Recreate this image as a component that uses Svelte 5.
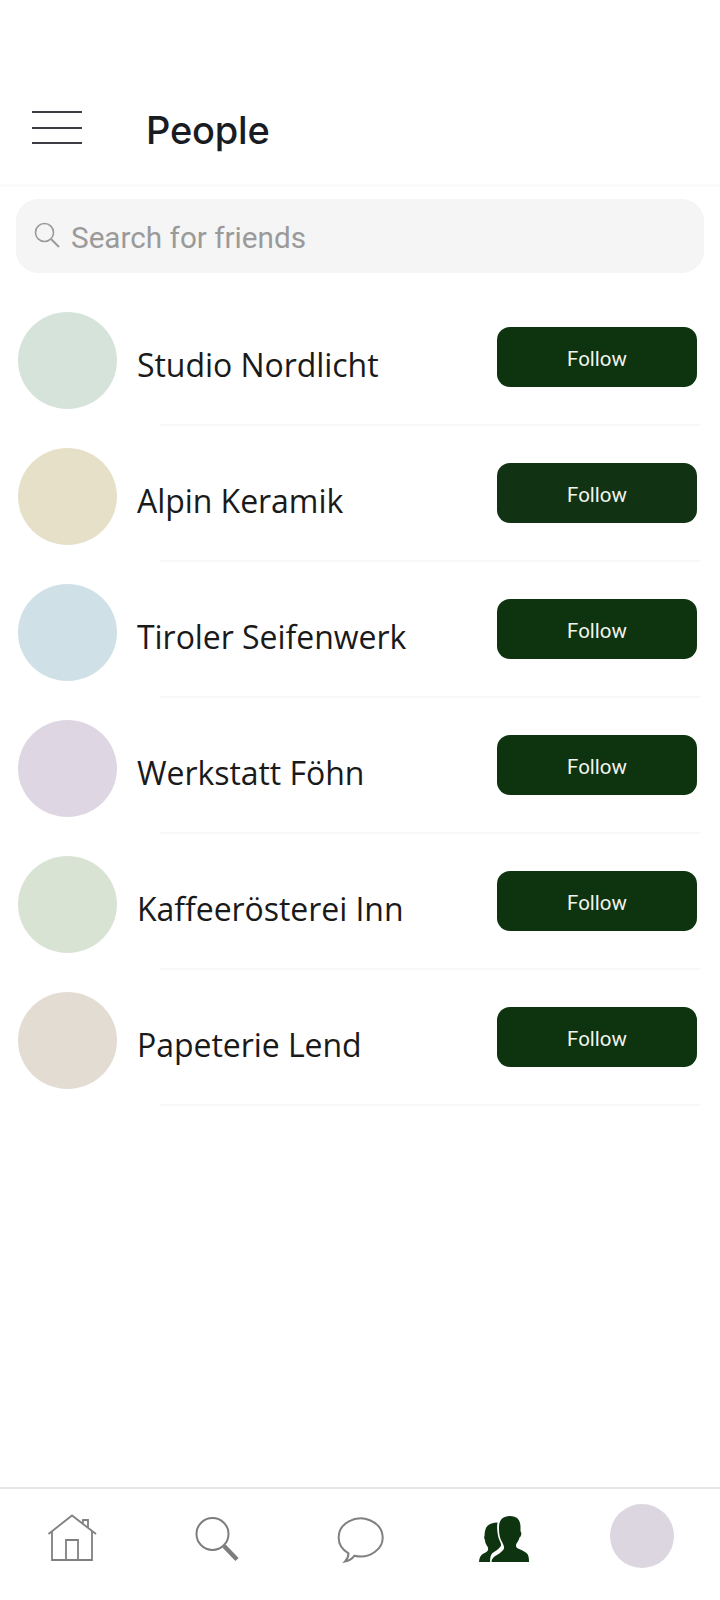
<script>
  const people = [
    { name: 'Studio Nordlicht', color: '#d5e3db', btn: '#0e330f' },
    { name: 'Alpin Keramik', color: '#e6e0c8', btn: '#123313' },
    { name: 'Tiroler Seifenwerk', color: '#cfe0e6', btn: '#0e330f' },
    { name: 'Werkstatt Föhn', color: '#dfd6e3', btn: '#0e330f' },
    { name: 'Kaffeerösterei Inn', color: '#d9e3d4', btn: '#0e330f' },
    { name: 'Papeterie Lend', color: '#e3dcd3', btn: '#0e330f' }
  ];
</script>

<div class="page">
  <header class="header">
    <button class="burger" aria-label="Menu"><span></span><span></span><span></span></button>
    <h1>People</h1>
  </header>

  <div class="search">
    <svg class="search-icon" viewBox="0 0 28 28" width="28" height="28" fill="none" stroke="#9a9a9a" stroke-width="1.6">
      <circle cx="11.5" cy="11.5" r="9" />
      <path d="M18 18l8 8" stroke-width="2" />
    </svg>
    <span class="placeholder">Search for friends</span>
  </div>

  <ul class="list">
    {#each people as p}
      <li class="row">
        <div class="avatar" style="background:{p.color}"></div>
        <span class="name">{p.name}</span>
        <button class="follow" style="background:{p.btn}">Follow</button>
      </li>
    {/each}
  </ul>

  <nav class="nav">
    <div class="cell">
      <svg viewBox="0 0 50 48" width="50" height="48" fill="none" stroke="#808080" stroke-width="1.8">
        <path d="M1.500 20L25 1.500 49 20" />
        <path d="M5 17v29h40V17" />
        <path d="M19 46V26h12v20" />
        <path d="M36 9V6h5v7" />
      </svg>
    </div>
    <div class="cell">
      <svg viewBox="0 0 46 48" width="46" height="48" fill="none" stroke="#7d7d7d" stroke-width="2">
        <circle cx="19.500" cy="20" r="16" />
        <path d="M31 32L44 45.500" stroke-width="4.500" />
      </svg>
    </div>
    <div class="cell">
      <svg viewBox="0 0 50 50" width="50" height="50" fill="none" stroke="#808080" stroke-width="2">
        <path d="M19.500 41.700A22 19 0 1 0 13.500 39.300C13.500 42 12 45.500 10 47.500C13.500 47 17 45 19.500 41.700Z" />
      </svg>
    </div>
    <div class="cell">
      <svg viewBox="0 0 52 48" width="52" height="48" fill="#0e330f">
        <path d="M13.500 48c.3-2.500 1-4 3-5.500 3-2 7-4 9-7 1-1.500.5-3.500-.5-5.500-1.500-3-3-5.500-3.500-9-.5-3-.5-6-.5-8C21 6 25 2 32 2s10.500 4 10.500 11v4.500c1 .5 1 2.500.5 4-.3 1-.8 1.500-1.500 2-.5 2.500-2 4.500-3 6-1 2-.5 4 1.500 5 3 1.500 6 2.500 8.500 4.500 2 1.500 2.500 5 2.500 9z" />
        <path d="M1 48c.2-3 1-6 3-7.500 2-1.500 5.500-2.500 6-4.500 .5-2-.5-3.500-1.500-5-1-1.500-1.500-3.500-1.500-5-1-1-1-3-.5-4 0-3 .5-6 1.500-8 1.500-3 5.500-5.500 11.500-5.500-.5 3-.5 6 0 10 .5 3.500 1 6 2.500 9 1 2 1.500 3.500 .5 5-1.500 2.500-5 4.500-8 6.500-1.500 1.500-2.500 4-2.500 9z" />
      </svg>
    </div>
    <div class="cell last"><div class="me"></div></div>
  </nav>
</div>

<style>
  :global(body) { margin: 0; background: #fff; }
  .page {
    width: 720px;
    height: 1600px;
    display: flex;
    flex-direction: column;
    background: #fff;
    overflow: hidden;
    font-family: "Inter", "Liberation Sans", sans-serif;
  }
  .header {
    height: 187px;
    box-sizing: border-box;
    padding: 111px 0 0 32px;
    display: flex;
    align-items: flex-start;
    border-bottom: 3px solid #fbfbfb;
  }
  .burger {
    width: 50px;
    height: 33px;
    padding: 0;
    border: 0;
    background: none;
    display: flex;
    flex-direction: column;
    justify-content: space-between;
  }
  .burger span { display: block; height: 2px; background: #3c3d42; }
  h1 {
    margin: -4px 0 0 64px;
    font-size: 38px;
    line-height: 46px;
    font-weight: 500;
    letter-spacing: -0.2px;
    color: #1a1c24;
  }
  .search {
    margin: 12px 16px 0;
    height: 74px;
    border-radius: 22px;
    background: #f5f5f5;
    display: flex;
    align-items: center;
    padding-left: 17px;
    gap: 10px;
  }
  .search-icon { margin-top: -2px; }
  .placeholder {
    font-family: "Roboto", sans-serif;
    font-size: 29.7px;
    color: #9a9a9a;
    margin-top: 2px;
  }
  .list { list-style: none; margin: 17px 0 0; padding: 0; flex: 1; }
  .row {
    height: 136px;
    box-sizing: border-box;
    position: relative;
    display: flex;
    align-items: center;
    padding: 0 23px 0 18px;
  }
  .row::after {
    content: "";
    position: absolute;
    left: 160px;
    right: 20px;
    bottom: 0;
    height: 2px;
    background: #f8f8f8;
  }
  .avatar { width: 99px; height: 97px; border-radius: 50%; flex: none; margin-top: 4px; }
  .name {
    flex: 1;
    margin-left: 20px;
    font-family: "Open Sans", sans-serif;
    font-size: 32px;
    letter-spacing: -0.05px;
    color: #1a1a1a;
    margin-top: 12px;
  }
  .follow {
    width: 200px;
    height: 60px;
    border: 0;
    border-radius: 13px;
    padding: 3px 0 0;
    color: #f2f5ee;
    font-family: "Roboto", sans-serif;
    font-size: 20.5px;
    font-weight: 400;
    margin-top: -2px;
  }
  .nav {
    height: 113px;
    box-sizing: border-box;
    border-top: 2px solid #e6e6e6;
    display: grid;
    grid-template-columns: repeat(5, 144px);
    flex: none;
  }
  .cell { display: flex; justify-content: center; align-items: flex-start; padding-top: 25px; }
  .last { padding: 15px 12px 0 0; }
  .me { width: 64px; height: 64px; border-radius: 50%; background: #dcd6e0; }
</style>
